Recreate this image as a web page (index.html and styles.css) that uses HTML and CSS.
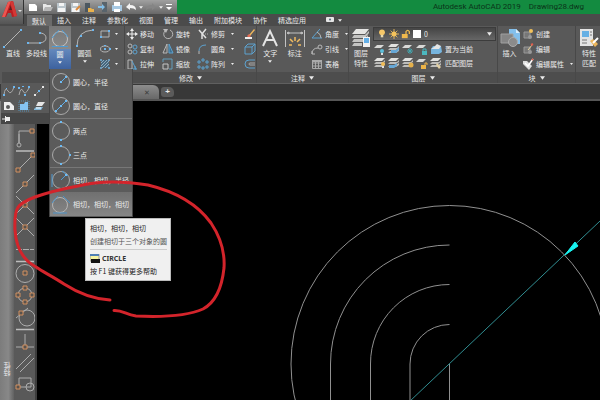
FILE: index.html
```html
<!DOCTYPE html>
<html lang="zh-CN">
<head>
<meta charset="utf-8">
<title>Autodesk AutoCAD 2019 - Drawing28.dwg</title>
<link rel="stylesheet" href="styles.css">
</head>
<body>
<svg class="sprite" aria-hidden="true">
  <symbol id="dd" viewBox="0 0 6 4"><path d="M0 0h6L3 4z" fill="currentColor"/></symbol>
  <symbol id="sheets" viewBox="0 0 12 12"><path d="M3 1h8l-3 3H0z" fill="#e2e2e0"/><path d="M2 5h7l2-2v2L8 7H0zM2 8h6l3-2v2L8 10H0z" fill="#bdbdbb"/></symbol>
  <symbol id="onesheet" viewBox="0 0 12 12"><path d="M3 2h7L7 5H0z" fill="#d8d8d6"/></symbol>
  <symbol id="bulb" viewBox="0 0 10 12"><circle cx="5" cy="4" r="3.500" fill="#f6c768"/><path d="M3.500 7h3v3h-3z" fill="#e8d9b0"/></symbol>
  <symbol id="sun" viewBox="0 0 12 12"><circle cx="6" cy="6" r="3" fill="#f4c35c"/><path d="M6 0v12M0 6h12M2 2l8 8M10 2l-8 8" stroke="#f4c35c"/></symbol>
  <symbol id="lock" viewBox="0 0 12 12"><path d="M1 6h7v5H1z" fill="#f0b94d"/><path d="M6 6V3q2-3 4 0v3" fill="none" stroke="#f0b94d" stroke-width="1.500"/></symbol>
  <symbol id="ring" viewBox="0 0 20 20"><circle cx="10" cy="10" r="8.500" fill="none" stroke="#a9a9a9"/></symbol>
</svg>

<header class="app-head">
  <button class="app-logo" aria-label="应用程序菜单">
    <svg width="24" height="24" viewBox="0 0 24 24"><path d="M2 17 8 2l5-1 4 15-5 1-1-4H8l-2 4z" fill="#b91e22"/><path d="M8 2l3-1-6 16H2z" fill="#ed5550"/><path d="M9 10l2-5 1 5z" fill="#5a2020"/><path d="M13 1l4 15-3 .5L10 2z" fill="#d43835"/><path d="M18 10h4l-2 2z" fill="#ddd"/></svg>
  </button>
  <div class="head-main">
    <div class="titlebar">
      <div class="quick">
        <button aria-label="新建"><svg width="12" height="12" viewBox="0 0 12 12"><path d="M2 3h6l2 2v5H2z" fill="#fff"/></svg></button>
        <button aria-label="打开"><svg width="12" height="12" viewBox="0 0 12 12"><path d="M2 3h3l1 1h4v6H2z" fill="#e9e9e9"/><path d="M2 10l2-4h8l-2 4z" fill="#b7b7b7"/></svg></button>
        <button aria-label="保存"><svg width="12" height="12" viewBox="0 0 12 12"><path d="M2 2h9v9H2z" fill="#bcc6cc"/><path d="M4 2h5v3H4zM3 7h7v4H3z" fill="#f4f4f4"/></svg></button>
        <button aria-label="另存为"><svg width="12" height="12" viewBox="0 0 12 12"><path d="M2 2h9v9H2z" fill="#bcc6cc"/><path d="M4 2h5v3H4zM3 7h7v4H3z" fill="#f4f4f4"/><path d="M7 9l4-4" stroke="#d9883c" stroke-width="2"/></svg></button>
        <button aria-label="从移动设备打开"><svg width="12" height="12" viewBox="0 0 12 12"><path d="M2 2h5v9H2z" fill="#4d5860"/><path d="M5 7h3l1 1h2v3H5z" fill="#eab24c"/></svg></button>
        <button aria-label="保存到移动设备"><svg width="12" height="12" viewBox="0 0 12 12"><path d="M5 1h5v10H5z" fill="#59646c"/><path d="M1 5h4V3l3 3-3 3V7H1z" fill="#83bfe8"/></svg></button>
        <button aria-label="打印"><svg width="12" height="12" viewBox="0 0 12 12"><path d="M1 4h10v6H1z" fill="#a7c9e3"/><path d="M3 1h6v4H3zM3 8h6v3H3z" fill="#fff"/></svg></button>
        <button aria-label="放弃"><svg width="12" height="12" viewBox="0 0 12 12"><path d="M1 6l4-4v2q6 0 6 5-2-2-6-2v2z" fill="#f4f4f4"/></svg></button>
        <svg class="dd"><use href="#dd"/></svg>
        <button aria-label="重做"><svg width="12" height="12" viewBox="0 0 12 12"><path d="M11 6L7 2v2Q1 4 1 9q2-2 6-2v2z" fill="#858585"/></svg></button>
        <svg class="dd"><use href="#dd"/></svg>
        <button aria-label="自定义快速访问工具栏"><svg width="8" height="12" viewBox="0 0 8 12"><path d="M1 3h6v1H1zM1 6h6L4 9z" fill="#fff"/></svg></button>
      </div>
      <div class="app-title"><span>Autodesk AutoCAD 2019</span><span>Drawing28.dwg</span></div>
    </div>
    <nav class="tabs">
      <a class="active" href="#">默认</a><a href="#">插入</a><a href="#">注释</a><a href="#">参数化</a><a href="#">视图</a><a href="#">管理</a><a href="#">输出</a><a href="#">附加模块</a><a href="#">协作</a><a href="#">精选应用</a>
      <button class="tab-more" aria-label="功能区显示"><svg width="8" height="6" viewBox="0 0 8 6"><rect width="8" height="5" rx="1" fill="#e5e5e5"/><circle cx="4" cy="2.500" r="1" fill="#50677a"/></svg><svg class="dd"><use href="#dd"/></svg></button>
    </nav>
  </div>
</header>

<section class="ribbon">
  <div class="panel draw">
    <div class="panel-body">
      <button class="big w-line"><svg width="20" height="20" viewBox="0 0 20 20"><path d="M1 19L18 2" stroke="#b4b4b4"/><path d="M0 18h2v2H0zM17 1h2v2h-2z" fill="#6db6ee"/></svg>直线</button>
      <button class="big w-poly"><svg width="20" height="20" viewBox="0 0 20 20"><path d="M1 15h12q6-1 6-5t-5-5" fill="none" stroke="#b4b4b4"/><path d="M0 14h2v2H0zM12 14h2v2h-2zM12 4h2v2h-2z" fill="#6db6ee"/></svg>多段线</button>
      <div class="split">
        <button class="split-top" aria-label="相切，相切，相切"><svg width="20" height="20" viewBox="0 0 20 20"><circle cx="10" cy="11" r="7.500" fill="none" stroke="#c2c2c2"/><path d="M2 18.500h16M2 10L9 2M12 2l6 7" stroke="#4d9bd4" fill="none"/></svg></button>
        <button class="split-bottom">圆<svg class="dd"><use href="#dd"/></svg></button>
        <div class="menu" role="menu">
          <button role="menuitem"><svg width="20" height="20" viewBox="0 0 20 20"><use href="#ring"/><path d="M10 10l5-5" stroke="#5fb0ec"/><path d="M9 9h2v2H9zM14 4h2v2h-2z" fill="#6ebcf4"/></svg>圆心，半径</button>
          <button role="menuitem"><svg width="20" height="20" viewBox="0 0 20 20"><use href="#ring"/><path d="M5 15L15 5" stroke="#5fb0ec"/><path d="M4 14h2v2H4zM9 9h2v2H9zM14 4h2v2h-2z" fill="#6ebcf4"/></svg>圆心，直径</button>
          <hr>
          <button role="menuitem"><svg width="20" height="20" viewBox="0 0 20 20"><use href="#ring"/><path d="M9 0h2v2H9zM9 18h2v2H9z" fill="#6ebcf4"/></svg>两点</button>
          <button role="menuitem"><svg width="20" height="20" viewBox="0 0 20 20"><use href="#ring"/><path d="M9 0h2v2H9zM9 18h2v2H9zM18 9h2v2h-2z" fill="#6ebcf4"/></svg>三点</button>
          <hr>
          <button role="menuitem"><svg width="20" height="20" viewBox="0 0 20 20"><use href="#ring"/><path d="M10 10l5-5M1 4v13M11 1l6 5" stroke="#4c9bd4"/><path d="M14 4h2v2h-2z" fill="#6ebcf4"/></svg>相切，相切，半径</button>
          <button role="menuitem" class="hover"><svg width="20" height="20" viewBox="0 0 20 20"><circle cx="9" cy="11" r="7.500" fill="none" stroke="#b5b5b5"/><path d="M2 19h14M1 9l6-7M12 2l7 7" stroke="#4c93c8"/></svg>相切，相切，相切</button>
        </div>
      </div>
      <button class="big w-arc"><svg width="20" height="20" viewBox="0 0 20 20"><path d="M2 18Q2 3 18 2" fill="none" stroke="#b4b4b4"/><path d="M1 17h2v2H1zM5 7h2v2H5zM17 1h2v2h-2z" fill="#6db6ee"/></svg>圆弧<svg class="dd"><use href="#dd"/></svg></button>
      <div class="rows">
        <button class="tool" aria-label="矩形"><svg width="12" height="12" viewBox="0 0 12 12"><path d="M2 3h8v6H2z" fill="none" stroke="#b4b4b4"/><path d="M1 8h2v2H1zM9 2h2v2H9z" fill="#6db6ee"/></svg><svg class="dd"><use href="#dd"/></svg></button>
        <button class="tool" aria-label="椭圆"><svg width="12" height="12" viewBox="0 0 12 12"><ellipse cx="6" cy="6" rx="4.500" ry="3" fill="none" stroke="#b4b4b4"/><path d="M5 5h2v2H5zM10 5h2v2h-2zM5 2h2v1H5z" fill="#6db6ee"/></svg><svg class="dd"><use href="#dd"/></svg></button>
        <button class="tool" aria-label="图案填充"><svg width="12" height="12" viewBox="0 0 12 12"><path d="M2 2h8v8H2z" fill="#46687f"/><path d="M2 5l3-3M2 8l6-6M3 10l7-7M6 10l4-4" stroke="#8fa9ba"/><path d="M1 1h2v2H1zM9 1h2v2H9zM1 9h2v2H1zM9 9h2v2H9z" fill="#6f9cba"/></svg><svg class="dd"><use href="#dd"/></svg></button>
      </div>
    </div>
    <div class="panel-title"></div>
  </div>

  <div class="panel modify">
    <div class="panel-body">
      <div class="rows c-move">
        <button class="tool"><svg width="12" height="12" viewBox="0 0 12 12"><path d="M6 2v8M2 6h8" stroke="#eee"/><path d="M6 0l2 3H4zM6 12l2-3H4zM0 6l3-2v4zM12 6L9 4v4z" fill="#eee"/></svg>移动</button>
        <button class="tool"><svg width="12" height="12" viewBox="0 0 12 12"><circle cx="4" cy="3" r="2" fill="none" stroke="#b9b9b9"/><circle cx="9" cy="4" r="2" fill="none" stroke="#5da2cf"/><circle cx="4" cy="9" r="2" fill="none" stroke="#b9b9b9"/><circle cx="9" cy="9" r="2" fill="none" stroke="#5da2cf"/></svg>复制</button>
        <button class="tool"><svg width="12" height="12" viewBox="0 0 12 12"><path d="M2 2h4v9H2z" fill="none" stroke="#b9b9b9"/><path d="M6 3l4 8H6M9 8v3h2" fill="none" stroke="#5da2cf"/></svg>拉伸</button>
      </div>
      <div class="rows c-rotate">
        <button class="tool"><svg width="12" height="12" viewBox="0 0 12 12"><path d="M8 2a4.500 4.500 0 1 1-5 1" fill="none" stroke="#b9b9b9"/><path d="M1 1l5 0-2 4z" fill="#b9b9b9"/></svg>旋转</button>
        <button class="tool"><svg width="12" height="12" viewBox="0 0 12 12"><path d="M5 1v9H1z" fill="none" stroke="#b9b9b9"/><path d="M7 1v9h4z" fill="#3d6c8b" stroke="#5da2cf"/></svg>镜像</button>
        <button class="tool"><svg width="12" height="12" viewBox="0 0 12 12"><path d="M1 4V1h9v10H7" fill="none" stroke="#639ebd"/><path d="M1 6h5v5H1z" fill="none" stroke="#c5c5c5"/></svg>缩放</button>
      </div>
      <div class="rows c-trim">
        <button class="tool"><svg width="12" height="12" viewBox="0 0 12 12"><path d="M2 2l7 8M9 1L5 6v5" stroke="#e1e1e1" stroke-width="1.500" fill="none"/><path d="M6 6h5" stroke="#aaa" stroke-dasharray="1 1"/></svg>修剪<svg class="dd"><use href="#dd"/></svg></button>
        <button class="tool"><svg width="12" height="12" viewBox="0 0 12 12"><path d="M2 11V8" stroke="#b9b9b9"/><path d="M2 8q0-6 7-6" fill="none" stroke="#5da2cf"/></svg>圆角<svg class="dd"><use href="#dd"/></svg></button>
        <button class="tool"><svg width="12" height="12" viewBox="0 0 12 12"><path d="M5 1h2v2H5zM1 3h2v2H1zM9 3h2v2H9zM1 8h2v2H1zM9 8h2v2H9zM5 9h2v2H5z" fill="none" stroke="#5da2cf"/></svg>阵列<svg class="dd"><use href="#dd"/></svg></button>
      </div>
      <div class="rows">
        <button class="tool" aria-label="删除"><svg width="12" height="12" viewBox="0 0 12 12"><path d="M5 7l5-6 1 1-5 6z" fill="#f0b75b"/><path d="M3 8l2-2 2 2-2 2z" fill="#e36b55"/><path d="M1 10h7" stroke="#ededed" stroke-width="2"/></svg></button>
        <button class="tool" aria-label="分解"><svg width="12" height="12" viewBox="0 0 12 12"><path d="M1 4h7v7H1zM1 4l3-3h7v7l-3 3M8 4l3-3" fill="none" stroke="#5da2cf"/></svg></button>
        <button class="tool" aria-label="偏移"><svg width="12" height="12" viewBox="0 0 12 12"><path d="M11 2H5a4 4 0 0 0 0 8h6" fill="none" stroke="#5da2cf"/><path d="M11 5H6a1 1 0 0 0 0 2h5" fill="none" stroke="#aaa"/></svg></button>
      </div>
    </div>
    <button class="panel-title">修改<svg class="dd"><use href="#dd"/></svg></button>
  </div>

  <div class="panel annotate">
    <div class="panel-body">
      <button class="big w-text"><svg width="18" height="20" viewBox="0 0 18 20"><path d="M2 18L9 3l7 15M4.500 12h9" fill="none" stroke="#e4e4e4" stroke-width="2"/></svg>文字<svg class="dd"><use href="#dd"/></svg></button>
      <button class="big w-dim"><svg width="20" height="20" viewBox="0 0 20 20"><path d="M.5 2v17M19.500 2v17M2 5h16M2 5l2-1v2zM18 5l-2-1v2z" fill="none" stroke="#c2c2c2"/><path d="M4 17h3M13 17h3M5 11l3 3M15 11l-3 3M10 9v4" stroke="#f0bb60" stroke-width="1.500"/></svg>标注</button>
      <div class="rows c-annot">
        <button class="tool"><svg width="12" height="12" viewBox="0 0 12 12"><path d="M11 10H1L9 1" fill="none" stroke="#5da2cf"/><path d="M6 4q4 2 4 6" fill="none" stroke="#b9b9b9"/></svg>角度<svg class="dd"><use href="#dd"/></svg></button>
        <button class="tool"><svg width="12" height="12" viewBox="0 0 12 12"><path d="M1 11q0-6 6-6M1 8v3h3" fill="none" stroke="#b9b9b9"/><circle cx="9" cy="4" r="2" fill="none" stroke="#b9b9b9"/></svg>引线<svg class="dd"><use href="#dd"/></svg></button>
        <button class="tool"><svg width="12" height="12" viewBox="0 0 12 12"><path d="M1.500 2.500h9v8h-9zM1 5h10M1 8h10M4.500 3v8M7.500 3v8" fill="none" stroke="#ababab"/><path d="M1 2h10v2H1z" fill="#ababab"/></svg>表格</button>
      </div>
    </div>
    <button class="panel-title">注释<svg class="dd"><use href="#dd"/></svg></button>
  </div>

  <div class="panel layers">
    <div class="panel-body">
      <button class="big w-layer"><svg width="20" height="20" viewBox="0 0 20 20"><path d="M5 1h13l-4 5H1z" fill="#e4e4e2"/><path d="M3 7h11l4-4v2l-4 5H1zM3 11h11l3-4v3l-3 4H1zM3 15h8v3H1z" fill="#c4c4c2"/><path d="M12 9h7v10h-7z" fill="#f2f2f2"/><path d="M13 10h5v5h-5z" fill="#64b0e8"/></svg><span>图层<br>特性</span></button>
      <div class="layer-tools">
        <div class="combo">
          <svg width="10" height="10"><use href="#bulb"/></svg><svg width="10" height="10"><use href="#sun"/></svg><svg width="10" height="10"><use href="#lock"/></svg><i class="swatch"></i>
          <select aria-label="图层"><option>0</option></select>
          <svg class="dd"><use href="#dd"/></svg>
        </div>
        <div class="layer-row">
          <button aria-label="关闭图层"><svg width="12" height="12" viewBox="0 0 12 12"><use href="#onesheet"/><circle cx="8" cy="8" r="2" fill="#5dc0dc"/><path d="M7 10h2v2H7z" fill="#ddd"/></svg></button>
          <button aria-label="隔离图层"><svg width="12" height="12" viewBox="0 0 12 12"><use href="#sheets"/><path d="M3 7h5l3-3v3L8 10H3z" fill="#66a7d6"/></svg></button>
          <button aria-label="冻结图层"><svg width="12" height="12" viewBox="0 0 12 12"><use href="#onesheet"/><path d="M8 5v6M5 8h6M6 6l4 4M10 6l-4 4" stroke="#45a5ad"/></svg></button>
          <button aria-label="锁定图层"><svg width="12" height="12" viewBox="0 0 12 12"><use href="#onesheet"/><path d="M6 8h5v4H6z" fill="#4bb7bf"/><path d="M7 8V6h3v2" fill="none" stroke="#4bb7bf"/></svg></button>
          <button class="wide"><svg width="12" height="12" viewBox="0 0 12 12"><path d="M3 3h8l1 6-3 2H1V6z" fill="#77b5df"/><path d="M4 4l3-3 4 2-2 3H1z" fill="#e5e5e5"/></svg>置为当前</button>
        </div>
        <div class="layer-row">
          <button aria-label="打开所有图层"><svg width="12" height="12" viewBox="0 0 12 12"><use href="#sheets"/><circle cx="9" cy="7" r="2" fill="#f0bc55"/><path d="M8 9h2v2H8z" fill="#ddd"/></svg></button>
          <button aria-label="取消隔离"><svg width="12" height="12" viewBox="0 0 12 12"><use href="#sheets"/><path d="M1 8h5l3-2v3l-3 2H1z" fill="#66a7d6"/></svg></button>
          <button aria-label="解冻所有图层"><svg width="12" height="12" viewBox="0 0 12 12"><use href="#sheets"/><circle cx="9" cy="8" r="2.500" fill="#e4b04b"/></svg></button>
          <button aria-label="解锁图层"><svg width="12" height="12" viewBox="0 0 12 12"><use href="#onesheet"/><path d="M5 8h5v4H5z" fill="#edb448"/><path d="M9 8V6h2v2" fill="none" stroke="#edb448"/></svg></button>
          <button class="wide"><svg width="12" height="12" viewBox="0 0 12 12"><use href="#sheets"/><path d="M7 6l4 4-2 2-3-4z" fill="#e1cfa4"/></svg>匹配图层</button>
        </div>
      </div>
    </div>
    <button class="panel-title">图层<svg class="dd"><use href="#dd"/></svg></button>
  </div>

  <div class="panel block">
    <div class="panel-body">
      <button class="big w-ins"><svg width="20" height="20" viewBox="0 0 20 20"><path d="M9 1h7l4 4v11H9z" fill="#83bfec"/><path d="M16 1v4h4z" fill="#d8ecfa"/><path d="M1 6h12v9H1z" fill="#858585" stroke="#a0a0a0"/><circle cx="13" cy="14" r="4.500" fill="#8b8b8b" stroke="#aaa"/></svg>插入</button>
      <div class="rows">
        <button class="tool"><svg width="12" height="12" viewBox="0 0 12 12"><path d="M2 4h6v6H2z" fill="#777" stroke="#999"/><circle cx="8" cy="9" r="2" fill="#999"/><circle cx="9" cy="3" r="2" fill="#f3c25b"/></svg>创建</button>
        <button class="tool"><svg width="12" height="12" viewBox="0 0 12 12"><path d="M2 4h6v6H2z" fill="#777" stroke="#999"/><circle cx="8" cy="9" r="2" fill="#999"/><path d="M6 7l4-5" stroke="#ead6a0"/><path d="M9 2l2-1" stroke="#df5e4d" stroke-width="2"/></svg>编辑</button>
        <button class="tool"><svg width="12" height="12" viewBox="0 0 12 12"><path d="M1 3h4l5 5-3 4-6-6z" fill="#ddd"/><path d="M3 5l3 3 5-7" fill="none" stroke="#fff" stroke-width="1.500"/><path d="M10 1l1 1" stroke="#df5e4d" stroke-width="2"/></svg>编辑属性<svg class="dd"><use href="#dd"/></svg></button>
      </div>
    </div>
    <button class="panel-title">块<svg class="dd"><use href="#dd"/></svg></button>
  </div>

  <div class="panel match">
    <div class="panel-body">
      <button class="big"><svg width="20" height="20" viewBox="0 0 20 20"><path d="M1 1h13v17H1z" fill="#e3e3e3"/><path d="M3 3h7v6H3z" fill="#67b0e4"/><path d="M3 12h5M3 15h5M11 4h2M11 7h2" stroke="#777"/><path d="M11 13l3-2 5 5-3 3z" fill="#ebb65c"/><path d="M14 15l5-5" stroke="#fff" stroke-width="2"/></svg><span>特性<br>匹配</span></button>
    </div>
    <div class="panel-title"></div>
  </div>
</section>

<div class="file-tabs">
  <div class="file-tab"><button aria-label="关闭">✕</button></div>
  <button class="new-tab" aria-label="新图形">+</button>
  <section class="draw-more">
    <div class="more-row">
      <button aria-label="样条曲线拟合"><svg width="12" height="12" viewBox="0 0 12 12"><path d="M1 10Q2 1 5 6t6-4" fill="none" stroke="#aaa"/><path d="M0 9h2v2H0zM3 3h1v1H3zM10 1h2v2h-2z" fill="#6db6ee"/></svg></button>
      <button aria-label="样条曲线控制点"><svg width="12" height="12" viewBox="0 0 12 12"><path d="M1 10Q3 1 5 6t6-3" fill="none" stroke="#aaa"/><path d="M0 2h2v2H0zM6 9h2v2H6zM10 1h2v2h-2zM4 1h2v1H4z" fill="#6db6ee"/></svg></button>
      <button aria-label="构造线"><svg width="12" height="12" viewBox="0 0 12 12"><path d="M2 10l8-8" stroke="#aaa" stroke-dasharray="2 1"/><path d="M1 9h2v2H1zM9 1h2v2H9z" fill="#e5e5e5"/><path d="M5 5h2v2H5z" fill="#6db6ee"/></svg></button>
    </div>
    <div class="more-row">
      <button aria-label="区域"><svg width="12" height="12" viewBox="0 0 12 12"><path d="M1 2h6l4 4v4H1z" fill="#eee"/><circle cx="5" cy="7" r="2" fill="#595959"/></svg></button>
      <button aria-label="边界"><svg width="12" height="12" viewBox="0 0 12 12"><path d="M1 1h10v10H1z" fill="none" stroke="#5790b5" stroke-dasharray="1 1"/><path d="M2 4h4l1-2h3v8H2z" fill="#84c5f5"/></svg></button>
      <button aria-label="区域覆盖"><svg width="12" height="12" viewBox="0 0 12 12"><path d="M5 2h7L9 6H3z" fill="#e5e5e5"/><path d="M1 9l2-2h7l-2 3H1z" fill="#85b9da"/><path d="M3 8h5" stroke="#fff"/></svg></button>
    </div>
    <button class="pin" aria-label="固定面板"><svg width="10" height="8" viewBox="0 0 10 8"><path d="M0 4h3M3.500 1v6" stroke="#eee"/><path d="M4 2h4v4H4z" fill="#eee"/></svg></button>
  </section>
</div>

<main class="workspace">
  <aside class="palette"><span>特性</span></aside>
  <div class="snapbar">
    <svg width="20" height="276" viewBox="15 124 20 276" fill="none" stroke="#adadad">
      <path d="M19 143v-12h11M19 134v10"/><path d="M16 151h18" stroke="#bdbdbd" stroke-width="1.500"/>
      <path d="M19 169l14-14M16 193l18-18M16 196l18 18M34 196l-18 18M16 218l18 18M34 218l-18 18"/>
      <path d="M16 249.500h18" stroke-dasharray="6 1"/><path d="M16 261.500h18" stroke="#bdbdbd" stroke-width="1.500"/>
      <circle cx="25" cy="273.500" r="9"/><circle cx="25" cy="295" r="7"/><circle cx="27" cy="318" r="8"/><path d="M16 318l12-10"/>
      <path d="M16 329.500h18" stroke="#bdbdbd" stroke-width="1.500"/><path d="M25 334v13M16 347h18M16 369l15-15M20 372l14-14"/><path d="M19 387v-9h12v9H19"/><circle cx="30" cy="387" r="4"/>
      <g stroke="#d39161" fill="#59534e"><path d="M30 129h4v4h-4zM16 168h4v4h-4zM31 153h4v4h-4zM23 182h4v4h-4zM23 203h4v4h-4zM23 225h4v4h-4zM23 271h4v4h-4zM23 286h4v4h-4zM23 300h4v4h-4zM16 293h4v4h-4zM30 293h4v4h-4zM19 311h4v4h-4zM23 345h4v4h-4zM16 385h4v4h-4z"/></g>
      <circle cx="19" cy="145" r="2" fill="#595959"/>
    </svg>
  </div>
  <div class="canvas">
    <svg width="100%" height="100%" fill="none" stroke="#909090" stroke-width="1">
      <g transform="translate(-37 -101)">
        <circle cx="449.500" cy="364" r="158.500"/>
        <path d="M449.500 245A119 119 0 0 0 330.500 364V1000M449.500 284.500A79 79 0 0 0 370.500 364V1000M449.500 324.500A39.500 39.500 0 0 0 410 364V1000M449.500 364V1000"/>
        <path d="M390 420L752 77" stroke="#308d91"/>
        <path d="M565 255l10-13 3 4z" fill="#17f5f2" stroke="#17f5f2"/>
      </g>
    </svg>
  </div>
</main>

<div class="tooltip" role="tooltip">
  <p class="strong">相切，相切，相切</p>
  <p>创建相切于三个对象的圆</p>
  <hr>
  <p class="cmd"><svg width="10" height="10" viewBox="0 0 10 10"><path d="M0 0h9v7H0z" fill="#f5f3a0" stroke="#999"/><path d="M0 0h9v2H0z" fill="#4f7fb5"/><path d="M1 5h9v4H1z" fill="#111"/></svg>CIRCLE</p>
  <p class="strong">按 F1 键获得更多帮助</p>
</div>

<svg class="markup" aria-hidden="true"><path d="M110 300C92 299 78 293 64 284C52 276 43 272 36 267C21 259 16 246 15 230C14 207 17 204 35 197C52 191 62 189 78 186C98 181 123 181 148 185C177 192 198 205 211 223C221 238 225 253 224 268C222 287 216 302 203 309C185 317 157 317 136 316C126 315 123 310 114 310.500"/></svg>
</body>
</html>
```
FILE: styles.css
```css
* { box-sizing: border-box; }

body {
  margin: 0;
  height: 100vh;
  display: flex;
  flex-direction: column;
  position: relative;
  overflow: hidden;
  background: #000;
  color: #ececec;
  font: 7px/10px "Noto Sans CJK SC", "Noto Sans", sans-serif;
}

button, select {
  font: inherit;
  color: inherit;
  border: 0;
  padding: 0;
  margin: 0;
  background: none;
}

a { color: inherit; text-decoration: none; }
svg { flex: none; display: block; }
.sprite { position: absolute; width: 0; height: 0; }
.dd { width: 4px; height: 3px; }

/* Title bar and ribbon tabs */
.app-head { display: flex; background: #4b4b4b; }
.app-logo {
  width: 24px;
  height: 24px;
  background: linear-gradient(#8e8e8e, #555);
  border-right: 1px solid #333;
}
.head-main { flex: 1; }
.titlebar { display: flex; height: 14px; background: #138b40; }
.quick {
  display: flex;
  align-items: center;
  gap: 2px;
  width: 153px;
  padding-left: 3px;
  background: linear-gradient(#a0a0a0, #686868);
}
.app-title {
  flex: 1;
  display: flex;
  justify-content: flex-end;
  gap: 8px;
  padding-right: 16px;
  font: 8px/14px Roboto, sans-serif;
  color: #0b3319;
}
.tabs { display: flex; height: 12px; line-height: 12px; padding-left: 3px; }
.tabs a { padding: 0 6px 0 5px; }
.tabs .active { background: #6b6b6b; margin: 1px 0 0; }
.tab-more { display: flex; align-items: center; gap: 4px; padding-left: 14px; }

/* Ribbon */
.ribbon { display: flex; height: 57px; background: #595959; }
.panel {
  display: flex;
  flex-direction: column;
  border-right: 1px solid #484848;
}
.panel-body { flex: 1; display: flex; }
.panel-title {
  display: flex;
  align-items: center;
  justify-content: center;
  gap: 4px;
  height: 11px;
  background: #4d4d4d;
}
.panel-title .dd, .combo .dd { width: 5px; height: 4px; }
.draw { width: 125px; padding-left: 2px; }
.modify { width: 132px; }
.annotate { width: 92px; }
.layers { width: 149px; }
.block { width: 78px; }
.match { flex: 1; border: 0; }

.big {
  display: flex;
  flex-direction: column;
  align-items: center;
  padding-top: 2px;
  white-space: nowrap;
}
.big > .dd, .split-bottom .dd { margin-top: 2px; }
.w-line { width: 22px; }
.w-poly { width: 25px; }
.w-arc { width: 27px; }
.w-text { width: 28px; }
.w-dim { width: 24px; }
.w-layer { width: 24px; }
.w-ins { width: 23px; }
.match .big { padding-left: 3px; }

.rows { display: grid; grid-template-rows: repeat(3, 15px); }
.tool { display: flex; align-items: center; gap: 2px; padding-left: 1px; white-space: nowrap; }
.tool .dd { margin-left: 4px; width: 3px; height: 2px; }
.draw .tool .dd { margin-left: 2px; }
.c-move { width: 36px; }
.c-rotate { width: 35px; }
.c-trim { width: 47px; }
.c-annot { padding-left: 4px; }

.split { position: relative; width: 22px; display: flex; flex-direction: column; }
.split-top {
  display: flex;
  justify-content: center;
  height: 23px;
  padding-top: 2px;
  background: linear-gradient(#777, #8a8a8a);
}
.split-bottom {
  display: flex;
  flex-direction: column;
  align-items: center;
  height: 20px;
  background: linear-gradient(#6489bd, #3d629f);
}

.menu {
  position: absolute;
  z-index: 3;
  top: 43px;
  left: 0;
  width: 84px;
  padding: 1px 0;
  background: #5b5b5b;
  border: solid #454545;
  border-width: 0 1px;
}
.menu button {
  display: flex;
  align-items: center;
  gap: 2px;
  width: 100%;
  height: 24px;
  padding-left: 1px;
  white-space: nowrap;
}
.menu hr { height: 1px; margin: 0; border: 0; background: #777; }
.menu .hover { background: linear-gradient(#707070, #868686); }

.layer-tools { flex: 1; display: flex; flex-direction: column; padding: 1px 1px 0 0; }
.combo {
  display: flex;
  align-items: center;
  gap: 2px;
  height: 14px;
  margin-bottom: 1px;
  padding: 0 3px;
  background: linear-gradient(#454545, #666);
  border: 1px solid #3c3c3c;
}
.combo select { flex: 1; appearance: none; padding-left: 1px; }
.swatch { width: 8px; height: 8px; background: #fff; }
.layer-row { display: flex; align-items: center; gap: 2px; height: 14px; padding-left: 1px; }
.layer-row .wide { display: flex; align-items: center; gap: 3px; white-space: nowrap; }

/* Drawing tabs with the slide-out half of the draw panel over them */
.file-tabs {
  position: relative;
  display: flex;
  align-items: flex-end;
  height: 18px;
  padding-left: 133px;
  background: #383838;
  border-top: 1px solid #606060;
  border-bottom: 2px solid #555;
}
.file-tab {
  width: 26px;
  height: 14px;
  padding-left: 11px;
  line-height: 14px;
  color: #3b3b3b;
  background: linear-gradient(#8d8d8d, #686868);
  border-top-right-radius: 6px;
}
.new-tab {
  width: 13px;
  height: 10px;
  margin: 0 0 2px 2px;
  font: bold 8px/10px "Liberation Sans", sans-serif;
  background: #5b5b5b;
  border-radius: 3px 5px 3px 3px;
}
.draw-more {
  position: absolute;
  z-index: 2;
  top: -1px;
  left: 1px;
  width: 48px;
  background: #595959;
}
.more-row { display: flex; gap: 3px; height: 15px; align-items: center; padding-left: 2px; }
.pin { display: flex; align-items: center; width: 100%; height: 11px; padding-left: 1px; background: #474747; }

/* Workspace */
.workspace { flex: 1; min-height: 0; display: flex; }
.palette {
  width: 14px;
  display: flex;
  align-items: flex-end;
  justify-content: center;
  padding-bottom: 24px;
  background: linear-gradient(90deg, #7c7c7c, #888 60%, #616161);
}
.palette span { writing-mode: vertical-rl; transform: rotate(180deg); }
.snapbar {
  width: 23px;
  padding: 23px 0 0 1px;
  overflow: hidden;
  background: #595959;
  border-right: 2px solid #3d3d3d;
}
.canvas { flex: 1; background: #000; }
.canvas svg { overflow: hidden; }

.tooltip {
  position: absolute;
  z-index: 4;
  top: 218px;
  left: 85px;
  padding: 3px 3px 2px 4px;
  color: #555;
  background: #f0f0f0;
  border: 1px solid #bbb;
}
.tooltip p { margin: 0; height: 13px; line-height: 12px; white-space: nowrap; }
.tooltip .strong { color: #222; }
.tooltip hr { height: 1px; margin: 1px 0 2px; border: 0; background: #ccc; }
.tooltip .cmd {
  display: flex;
  align-items: center;
  gap: 2px;
  font-family: "Noto Sans", sans-serif;
  font-weight: bold;
  color: #333;
}

.markup {
  position: absolute;
  z-index: 5;
  inset: 0;
  width: 100%;
  height: 100%;
  pointer-events: none;
  fill: none;
  stroke: #d3242b;
  stroke-width: 3;
  stroke-linecap: round;
}
```
